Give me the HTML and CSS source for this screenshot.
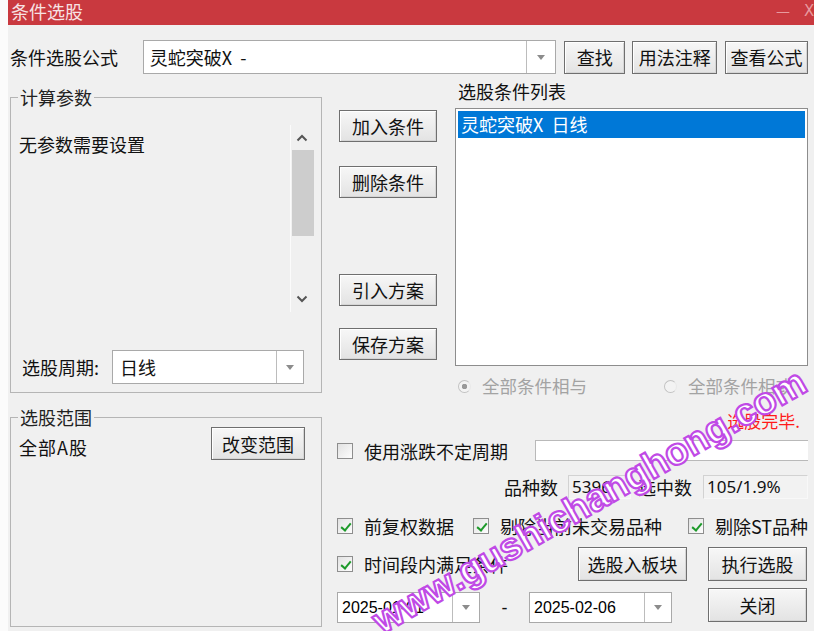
FILE: index.html
```html
<!DOCTYPE html>
<html lang="zh-CN">
<head>
<meta charset="utf-8">
<title>条件选股</title>
<link rel="stylesheet" href="styles.css">
</head>
<body>
<div class="window">
  <div class="titlebar">
    <span class="title">条件选股</span>
    <span class="tb-controls"><span class="tb-min">—</span><span class="tb-close">X</span></span>
  </div>
  <div class="content">
    <div class="row1">
      <span class="lbl-formula">条件选股公式</span>
      <div class="combo combo-formula"><span class="combo-text">灵蛇突破X&nbsp;&nbsp;-</span><span class="combo-btn"><i class="tri"></i></span></div>
      <button class="btn btn-find">查找</button>
      <button class="btn btn-usage">用法注释</button>
      <button class="btn btn-view">查看公式</button>
    </div>
    <div class="main">
      <div class="leftcol">
        <fieldset class="group group-params">
          <legend>计算参数</legend>
          <div class="params">
            <div class="params-text">无参数需要设置</div>
            <div class="scrollbar">
              <svg class="chev" width="12" height="8" viewBox="0 0 12 8"><path d="M1.5 6.5 L6 2 L10.5 6.5" fill="none" stroke="#555" stroke-width="2"/></svg>
              <div class="thumb"></div>
              <div class="sb-space"></div>
              <svg class="chev" width="12" height="8" viewBox="0 0 12 8"><path d="M1.5 1.5 L6 6 L10.5 1.5" fill="none" stroke="#555" stroke-width="2"/></svg>
            </div>
          </div>
          <div class="period-row">
            <span class="lbl-period">选股周期:</span>
            <div class="combo combo-period"><span class="combo-text">日线</span><span class="combo-btn"><i class="tri"></i></span></div>
          </div>
        </fieldset>
        <fieldset class="group group-range">
          <legend>选股范围</legend>
          <div class="range-row">
            <span class="range-text">全部A股</span>
            <button class="btn btn-range">改变范围</button>
          </div>
        </fieldset>
      </div>
      <div class="rightcol">
        <div class="upper">
          <div class="btncol">
            <button class="btn btn-side b1">加入条件</button>
            <button class="btn btn-side b2">删除条件</button>
            <button class="btn btn-side b3">引入方案</button>
            <button class="btn btn-side b4">保存方案</button>
          </div>
          <div class="listcol">
            <div class="list-label">选股条件列表</div>
            <div class="listbox">
              <div class="list-item selected">灵蛇突破X&nbsp;&nbsp;日线</div>
            </div>
          </div>
        </div>
        <div class="radio-row">
          <span class="radio checked"><i class="rd"></i>全部条件相与</span>
          <span class="radio r2"><i class="rd"></i>全部条件相或</span>
        </div>
        <div class="status">选股完毕.</div>
        <div class="row-var">
          <span class="cb"><i class="box"></i>使用涨跌不定周期</span>
          <div class="input-var"></div>
        </div>
        <div class="row-count">
          <span class="lbl">品种数</span>
          <div class="numbox nb1">5396</div>
          <span class="lbl lbl2">选中数</span>
          <div class="numbox nb2">105/1.9%</div>
        </div>
        <div class="row-opts">
          <span class="cb"><i class="box on"></i>前复权数据</span>
          <span class="cb cb-mid"><i class="box on"></i>剔除当前未交易品种</span>
          <span class="cb cb-st"><i class="box on"></i>剔除ST品种</span>
        </div>
        <div class="row-time">
          <span class="cb"><i class="box on"></i>时间段内满足条件</span>
          <button class="btn btn-block">选股入板块</button>
          <button class="btn btn-run">执行选股</button>
        </div>
        <div class="row-date">
          <div class="combo combo-date"><span class="combo-text date">2025-01-01</span><span class="combo-btn"><i class="tri"></i></span></div>
          <span class="dash">-</span>
          <div class="combo combo-date"><span class="combo-text date">2025-02-06</span><span class="combo-btn"><i class="tri"></i></span></div>
          <button class="btn btn-close">关闭</button>
        </div>
      </div>
    </div>
  </div>
</div>
<div class="watermark">www.gushichanghong.com</div>
</body>
</html>
```
FILE: styles.css
```css
html, body {
  margin: 0;
  padding: 0;
}
body {
  background: #fbfbfb;
  font-family: "Noto Sans CJK SC", "Microsoft YaHei", sans-serif;
  font-size: 18px;
  color: #111;
  width: 814px;
  height: 631px;
  overflow: hidden;
  position: relative;
}
.window {
  margin-left: 8px;
  width: 806px;
  height: 631px;
  background: #f0f0f0;
}
.titlebar {
  height: 25px;
  box-sizing: border-box;
  padding-top: 1px;
  background: #c9393f;
  display: flex;
  align-items: flex-start;
  justify-content: space-between;
  padding-left: 3px;
  color: #f7e2e3;
}
.title {
  font-size: 18px;
  line-height: 20px;
}
.tb-controls {
  display: flex;
  align-items: center;
  color: #e89a9e;
  font-size: 15px;
  line-height: 20px;
  font-family: "DejaVu Sans", sans-serif;
}
.tb-min { margin-right: 14px; font-size: 14px; }
.tb-close { width: 10px; overflow: hidden; }

.content {
  padding: 15px 6px 0 2px;
}
.row1 {
  display: flex;
  align-items: center;
  height: 34px;
}
.lbl-formula {
  width: 133px;
  line-height: 20px;
}
.combo {
  display: flex;
  background: #fff;
  border: 1px solid #a9a9a9;
  box-sizing: border-box;
}
.combo-text {
  flex: 1;
  display: flex;
  align-items: center;
  padding-left: 6px;
  white-space: nowrap;
  overflow: hidden;
}
.combo-btn {
  border-left: 1px solid #bcbcbc;
  display: flex;
  align-items: center;
  justify-content: center;
}
.tri {
  width: 0;
  height: 0;
  border-left: 4.5px solid transparent;
  border-right: 4.5px solid transparent;
  border-top: 5px solid #8c8c8c;
}
.combo-formula {
  width: 414px;
  height: 34px;
}
.combo-formula .combo-btn { width: 28px; }
.btn {
  font-family: "Noto Sans CJK SC", sans-serif;
  font-size: 18px;
  color: #111;
  background: linear-gradient(#f7f7f7, #e3e3e3);
  border: 1px solid #6f6f6f;
  box-shadow: inset 1px 1px 0 #ffffff, inset -1px -1px 0 #d5d5d5;
  padding: 0;
  box-sizing: border-box;
  line-height: 20px;
  border-radius: 0;
}
.btn-find { margin-left: 8px; width: 61px; height: 33px; }
.btn-usage { margin-left: 7px; width: 85px; height: 33px; }
.btn-view { margin-left: 8px; width: 83px; height: 33px; }

.main {
  display: flex;
  margin-top: 8px;
}
.leftcol {
  width: 313px;
  padding-top: 6px;
  display: flex;
  flex-direction: column;
}
.group {
  margin: 0;
  padding: 0;
  border: 1px solid #b5b5b5;
  box-sizing: border-box;
  min-width: 0;
}
.group legend {
  margin-left: 7px;
  padding: 0 2px;
  line-height: 18px;
  height: 18px;
  font-size: 18px;
  color: #222;
}
.group-params {
  height: 305px;
}
.params {
  display: flex;
  margin-top: 19px;
  height: 187px;
}
.params-text {
  flex: 1;
  padding-left: 8px;
  padding-top: 9px;
  line-height: 20px;
}
.scrollbar {
  width: 22px;
  margin-right: 8px;
  border-left: 1px solid #fbfbfb;
  display: flex;
  flex-direction: column;
  align-items: center;
}
.chev { margin: 9px 0 8px; display: block; }
.scrollbar .chev:last-child { margin: 0 0 9px; }
.thumb {
  width: 22px;
  height: 86px;
  background: #cdcdcd;
  margin-left: 1px;
}
.sb-space { flex: 1; }
.period-row {
  display: flex;
  align-items: center;
  margin-top: 38px;
  padding-left: 11px;
}
.lbl-period { width: 90px; line-height: 20px; }
.combo-period {
  width: 192px;
  height: 34px;
}
.combo-period .combo-btn { width: 26px; }
.combo-period .combo-text { padding-left: 7px; }

.group-range {
  margin-top: 15px;
  height: 219px;
}
.range-row {
  display: flex;
  justify-content: space-between;
  align-items: flex-start;
  padding-left: 8px;
  padding-right: 16px;
  margin-top: 1px;
}
.range-text { margin-top: 10px; line-height: 20px; letter-spacing: 1px; }
.btn-range { width: 94px; height: 33px; }

.rightcol {
  margin-left: 15px;
  width: 471px;
  display: flex;
  flex-direction: column;
}
.upper {
  display: flex;
}
.btncol {
  margin-left: 2px;
  width: 98px;
  display: flex;
  flex-direction: column;
}
.btn-side { width: 98px; height: 32px; }
.b1 { margin-top: 28px; }
.b2 { margin-top: 24px; }
.b3 { margin-top: 76px; }
.b4 { margin-top: 22px; }
.listcol {
  margin-left: 18px;
  width: 353px;
}
.list-label { line-height: 18px; height: 18px; padding-left: 3px; }
.listbox {
  margin-top: 8px;
  height: 258px;
  background: #fff;
  border: 1px solid #8d8d8d;
  box-sizing: border-box;
  padding: 2px;
}
.list-item {
  height: 27px;
  line-height: 27px;
  padding-left: 3px;
}
.list-item.selected {
  background: #0078d7;
  color: #fff;
}

.radio-row {
  display: flex;
  margin-top: 11px;
  margin-left: 121px;
  color: #a3a3a3;
  line-height: 18px;
  height: 18px;
  font-size: 17.5px;
}
.radio { display: flex; align-items: center; white-space: nowrap; }
.radio.r2 { margin-left: 77px; }
.rd {
  width: 13px;
  height: 13px;
  border-radius: 50%;
  border: 1.5px solid #c2c2c2;
  border-right-color: #e8e8e8;
  background: #f3f3f3;
  margin-right: 11px;
  position: relative;
  box-sizing: border-box;
}
.radio.checked .rd {
  background: radial-gradient(circle, #9a9a9a 0 2.5px, #f3f3f3 3px);
}
.status {
  margin-top: 17px;
  text-align: right;
  padding-right: 8px;
  color: #ff1a1a;
  line-height: 18px;
  height: 18px;
  font-size: 17px;
}

.cb {
  display: flex;
  align-items: center;
  white-space: nowrap;
  line-height: 18px;
}
.box {
  width: 16px;
  height: 16px;
  box-sizing: border-box;
  border: 1px solid #8e8e8e;
  background: linear-gradient(135deg, #e2e2e2, #fdfdfd);
  margin-right: 11px;
  position: relative;
  flex: none;
}
.box.on::after {
  content: "";
  position: absolute;
  left: 4.5px;
  top: 1.5px;
  width: 4px;
  height: 8px;
  border-right: 2px solid #1d9a2a;
  border-bottom: 2px solid #1d9a2a;
  transform: rotate(40deg);
}
.row-var {
  display: flex;
  align-items: center;
  margin-top: 10px;
  height: 21px;
}
.input-var {
  margin-left: auto;
  width: 273px;
  height: 21px;
  background: #fff;
  border: 1px solid #b9b9b9;
  border-right: none;
  box-sizing: border-box;
}
.row-count {
  display: flex;
  align-items: center;
  justify-content: flex-end;
  margin-top: 14px;
  height: 24px;
}
.lbl { line-height: 18px; }
.numbox {
  height: 24px;
  box-sizing: border-box;
  border: 1px solid #d2d2d2;
  border-right-color: #f8f8f8;
  border-bottom-color: #f8f8f8;
  background: #f2f2f2;
  line-height: 22px;
  padding-left: 3px;
  font-family: "Noto Sans", sans-serif;
  font-size: 17px;
}
.nb1 { width: 63px; margin-left: 10px; }
.lbl2 { margin-left: 7px; }
.nb2 { width: 105px; margin-left: 11px; }
.row-opts {
  display: flex;
  align-items: center;
  margin-top: 18px;
  height: 18px;
}
.cb-mid { margin-left: 19px; }
.cb-st { margin-left: 26px; }
.row-time {
  display: flex;
  align-items: center;
  margin-top: 12px;
  height: 34px;
}
.btn-block { margin-left: auto; width: 109px; height: 34px; }
.btn-run { margin-left: 21px; width: 99px; height: 34px; margin-right: 1px; }
.row-date {
  display: flex;
  align-items: flex-start;
  margin-top: 7px;
}
.combo-date {
  width: 143px;
  height: 31px;
  margin-top: 4px;
}
.combo-date .combo-btn { width: 26px; }
.combo-text.date {
  font-family: "Liberation Sans", Arial, sans-serif;
  font-size: 16px;
  padding-left: 4px;
  color: #000;
}
.dash {
  margin: 10px 0 0 0;
  width: 49px;
  text-align: center;
  line-height: 20px;
  font-family: "Liberation Sans", sans-serif;
}
.btn-close { margin-left: auto; width: 99px; height: 34px; margin-right: 1px; }

.watermark {
  position: absolute;
  left: 366px;
  top: 607px;
  transform: rotate(-29.8deg);
  transform-origin: 0 0;
  font-family: "Liberation Sans", Arial, sans-serif;
  font-weight: bold;
  font-size: 38px;
  line-height: 1;
  letter-spacing: 0;
  white-space: nowrap;
  color: #ffffff;
  -webkit-text-stroke: 2.2px #c04ae6;
  pointer-events: none;
}
```
